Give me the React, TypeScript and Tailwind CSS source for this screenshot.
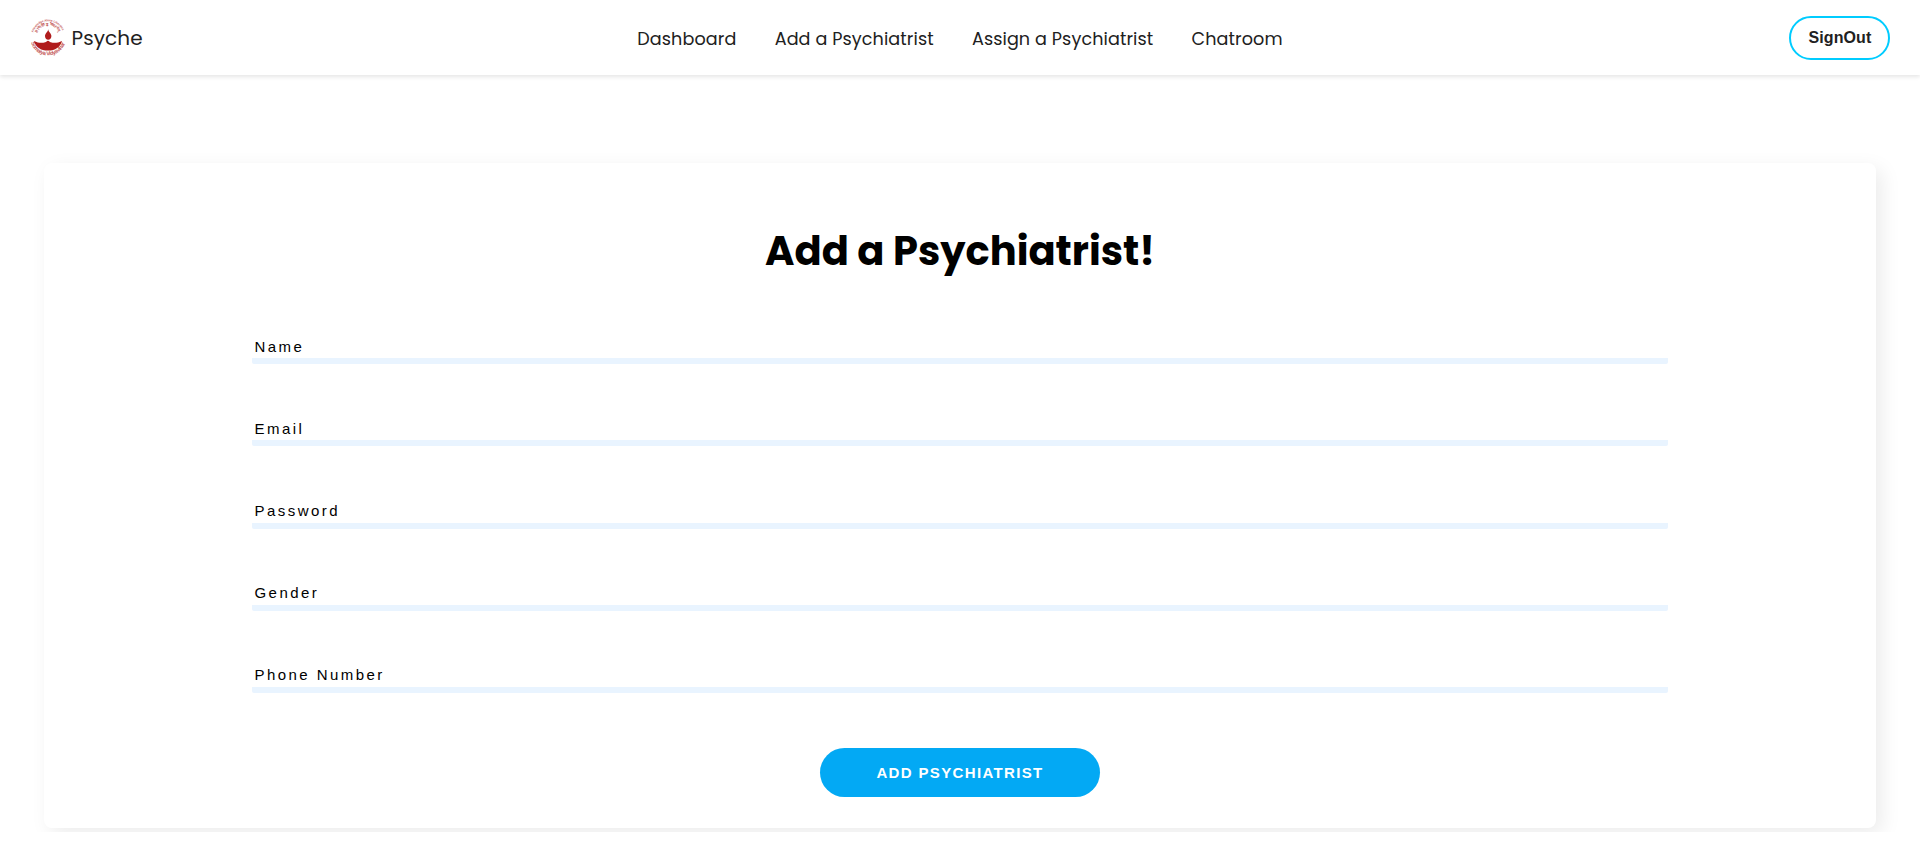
const links = ['Dashboard', 'Add a Psychiatrist', 'Assign a Psychiatrist', 'Chatroom'];

const fields = [
  { label: 'Name', size: 'h-[29px] mb-[53px]' },
  { label: 'Email', size: 'h-[29px] mb-[53px]' },
  { label: 'Password', size: 'h-[30px] mb-[52px]' },
  { label: 'Gender', size: 'h-[30px] mb-[52px]' },
  { label: 'Phone Number', size: 'h-[30px] mb-[52px]' },
];

function Logo() {
  return (
    <svg viewBox="0 0 36 38" className="h-[38px] w-9 shrink-0" fill="#b01c1c" aria-hidden="true">
      <defs>
        <path id="outer" d="M3.200 13.500 A15.600 15.600 0 0 1 33.200 13.500" />
        <path id="inner" d="M7.600 14 A11.200 11.200 0 0 1 28.800 14" />
        <path id="lower" d="M1 23.500 A17.800 17.800 0 0 0 35.200 23.500" />
      </defs>
      <g fontFamily="Liberation Sans" fontWeight="700" opacity="0.75">
        <text fontSize="3"><textPath href="#outer" textLength="38">Knowledge Alone Liberates</textPath></text>
        <text fontSize="4"><textPath href="#inner" textLength="26">ज्ञानादेव तु कैवल्यम्</textPath></text>
        <text fontSize="5.6"><textPath href="#lower" textLength="45">Somaiya Vidyavihar</textPath></text>
      </g>
      <path d="M18.200 10c0 3 3.200 4.200 3.200 7.100 0 2.400-1.400 3.700-3.200 3.700s-3.200-1.300-3.200-3.700c0-2.900 3.200-4.100 3.200-7.100Z" />
      <path d="M4 22c4 2 8 2.300 11.200 1.300 1.200-.4 1.600-1.600 2.800-1.600s1.600 1.200 2.800 1.600c3.200 1 7.200.7 11.200-1.300-1.600 6-6.600 9.600-14 9.600s-12.400-3.600-14-9.600Z" />
    </svg>
  );
}

export default function App() {
  return (
    <div className="h-[852px] overflow-hidden bg-white">
      <div className="flex h-[832px] flex-col overflow-hidden">
        <header className="flex h-[75px] shrink-0 items-center justify-between bg-white px-[30px] text-[#212121] shadow-[0_2px_4px_rgba(0,0,0,0.1)]">
          <div className="flex w-[260px] items-center gap-[5.5px]">
            <Logo />
            <span className="font-['Poppins','Inter',sans-serif] text-[20px] tracking-[0.1px]">Psyche</span>
          </div>
          <nav className="flex gap-[38.2px] pt-[3px] font-['Poppins','Inter',sans-serif] text-[17.6px] tracking-[0.1px]">
            {links.map((link) => (
              <a key={link} className="whitespace-nowrap">{link}</a>
            ))}
          </nav>
          <div className="flex w-[260px] justify-end">
            <button className="h-11 w-[101px] rounded-full border-2 border-[#0cf] pl-px font-['Liberation_Sans',Arial,sans-serif] text-[16px] font-bold tracking-[0.1px]">SignOut</button>
          </div>
        </header>
        <main className="mx-11 mt-[88px] flex h-[665px] shrink-0 flex-col items-center rounded-lg bg-white shadow-[6px_6px_20px_rgba(0,0,0,0.08)]">
          <h1 className="mt-[58px] h-[60px] font-['Poppins','Inter',sans-serif] text-[40px] leading-[60px] font-bold whitespace-nowrap text-black">Add a Psychiatrist!</h1>
          <form className="mt-[54px] flex w-[1416px] flex-col items-center font-['Liberation_Sans',Arial,sans-serif]">
            {fields.map((field) => (
              <label key={field.label} className={`${field.size} flex w-full flex-col rounded-xs border-b-6 border-[#e9f4ff] pl-[2.5px] text-[15px] leading-[23px] tracking-[2.45px] text-black`}>{field.label}</label>
            ))}
            <button type="button" className="mt-[3px] h-[49px] w-[280px] rounded-full bg-[#03a9f4] pt-0.5 text-[15px] font-bold tracking-[1.35px] text-white">ADD PSYCHIATRIST</button>
          </form>
        </main>
      </div>
    </div>
  );
}
